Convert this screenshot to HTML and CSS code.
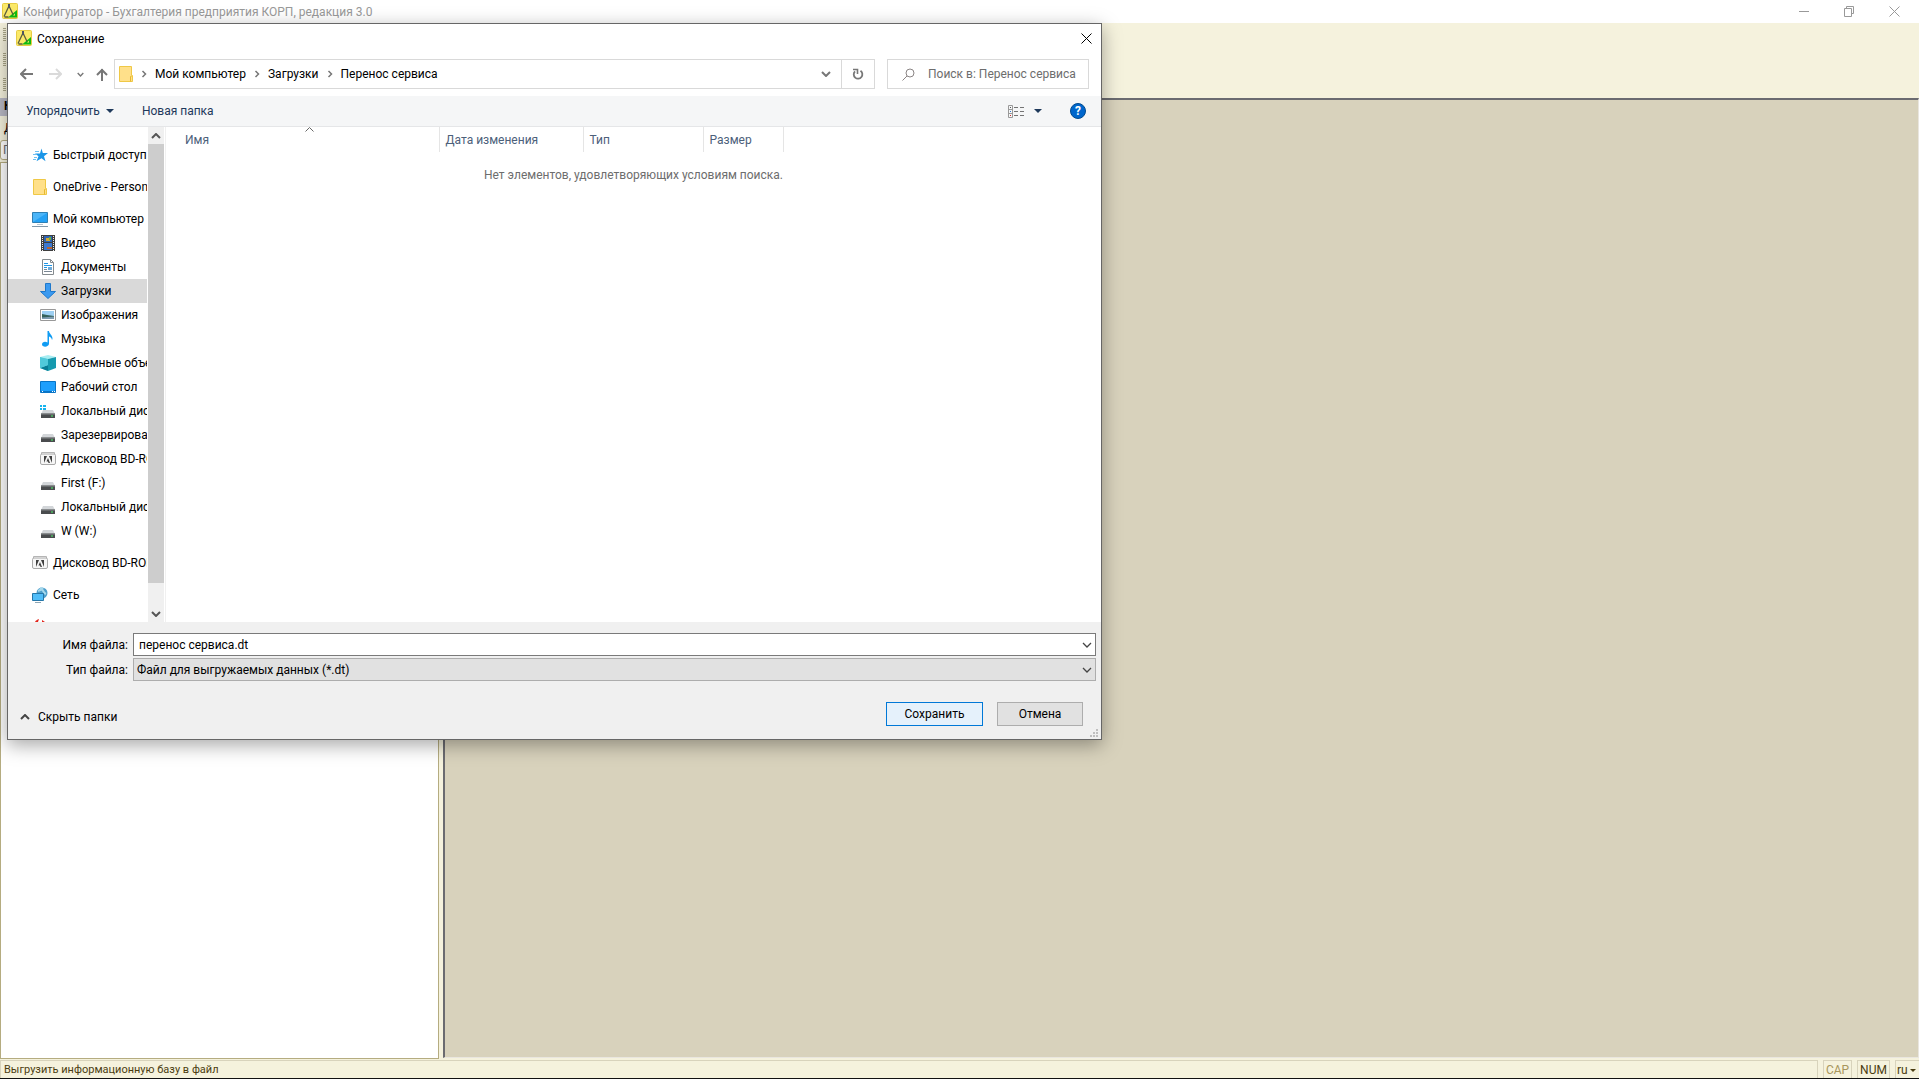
FILE: index.html
```html
<!DOCTYPE html>
<html lang="ru">
<head>
  <meta charset="UTF-8">
  <meta name="viewport" content="width=device-width, initial-scale=1.0">
  <title>Конфигуратор - Бухгалтерия предприятия КОРП, редакция 3.0</title>
  <link rel="stylesheet" href="styles.css">
</head>
<body>
  <!-- shared icons -->
  <svg class="sprite" aria-hidden="true">
    <symbol id="i-app" viewBox="0 0 16 16">
      <rect x=".5" y=".5" width="15" height="15" rx="1" fill="#fbe968" stroke="#e6cc45"/>
      <path d="M6 14.500L15 7v7.500z" fill="#0ebc12"/>
      <path d="M11 12.500l2-2v2z" fill="#fbe968"/>
      <path d="M7 3L2 13.500M7 3l4 8.500M2.500 14h4" fill="none" stroke="#5d5f3c" stroke-width="1.300"/>
      <path d="M6 1h2v4H6z" fill="#4e5560"/>
    </symbol>
    <symbol id="i-folder" viewBox="0 0 14 16">
      <path d="M.5.5h12v9h1v6H.5z" fill="#ffe08a" stroke="#efc846"/>
      <path d="M11.500 15.500v-5h1" fill="none" stroke="#e7b82f"/>
    </symbol>
    <symbol id="i-drive" viewBox="0 0 16 16">
      <path d="M3 7h10l2 4H1z" fill="#d3d6d9"/>
      <path d="M1 10.500h14V15H1z" fill="#4a4c4e"/>
      <path d="M1 10.500h14v1H1z" fill="#85888b"/>
      <path d="M11 12.500h2v1h-2z" fill="#4df26a"/>
    </symbol>
    <symbol id="i-bd" viewBox="0 0 16 16">
      <path d="M1.500 3V1.500h13V3" fill="none" stroke="#b5b5b5"/>
      <rect x=".5" y="3" width="15" height="10.500" rx="1.500" fill="#f6f6f6" stroke="#a9a9a9"/>
      <path d="M4 5h3L4 12zM12 5H9l3 7zM8 7l2 5H8.500L8 10.500H6.500z" fill="#3f3f3f"/>
    </symbol>
    <symbol id="i-down" viewBox="0 0 10 6">
      <path d="M1 1l4 4 4-4" fill="none" stroke="currentColor" stroke-width="1.300"/>
    </symbol>
    <symbol id="i-right" viewBox="0 0 6 8">
      <path d="M1.500 1l3 3-3 3" fill="none" stroke="currentColor" stroke-width="1.500"/>
    </symbol>
    <symbol id="i-caret" viewBox="0 0 8 4">
      <path d="M0 0h8L4 4z" fill="currentColor"/>
    </symbol>
    <symbol id="i-close" viewBox="0 0 11 11">
      <path d="M.5.5l10 10M10.500.5l-10 10" stroke="currentColor"/>
    </symbol>
  </svg>

  <div class="app">
    <header class="app-title">
      <svg class="icon"><use href="#i-app"/></svg>
      <h1>Конфигуратор - Бухгалтерия предприятия КОРП, редакция 3.0</h1>
      <div class="window-buttons">
        <button aria-label="Свернуть"><svg width="11" height="11"><path d="M0 5.500h10" stroke="currentColor"/></svg></button>
        <button aria-label="Восстановить"><svg width="11" height="11"><path d="M.5 2.500h7v8h-7zM2.500 2.500v-2h7v7h-2" fill="none" stroke="currentColor"/></svg></button>
        <button aria-label="Закрыть"><svg width="11" height="11"><use href="#i-close"/></svg></button>
      </div>
    </header>

    <div class="toolbars">
      <span class="grip"></span>
      <span class="grip"></span>
      <span class="grip"></span>
    </div>

    <div class="workspace">
      <aside class="config-panel">
        <div class="panel-title">Конфигурация</div>
        <div class="panel-menu">Действия</div>
        <input class="panel-search" type="text" placeholder="Поиск" aria-label="Поиск">
        <div class="config-tree"></div>
      </aside>
      <main class="mdi"></main>
    </div>

    <footer class="status">
      <span class="status-text">Выгрузить информационную базу в файл</span>
      <span class="status-cell off">CAP</span>
      <span class="status-cell num">NUM</span>
      <button class="status-cell lang">ru <svg width="6" height="3"><use href="#i-caret"/></svg></button>
    </footer>
  </div>

  <section class="dialog" role="dialog" aria-labelledby="dialog-title">
    <header class="dialog-title">
      <svg class="icon"><use href="#i-app"/></svg>
      <h2 id="dialog-title">Сохранение</h2>
      <button class="close" aria-label="Закрыть"><svg width="11" height="11"><use href="#i-close"/></svg></button>
    </header>

    <div class="navbar">
      <div class="history">
        <button aria-label="Назад"><svg width="13" height="12"><path d="M1 6h12M6 1L1 6l5 5" fill="none" stroke="#777" stroke-width="2"/></svg></button>
        <button aria-label="Вперед"><svg width="13" height="12"><path d="M0 6h12M7 1l5 5-5 5" fill="none" stroke="#dadada" stroke-width="2"/></svg></button>
        <button class="recent" aria-label="Последние"><svg width="7" height="5" viewBox="0 0 10 6"><path d="M1 1l4 4 4-4" fill="none" stroke="#777" stroke-width="2"/></svg></button>
        <button aria-label="Вверх"><svg width="12" height="13"><path d="M6 13V1M1 7l5-5 5 5" fill="none" stroke="#777" stroke-width="2"/></svg></button>
      </div>
      <nav class="address">
        <svg class="folder"><use href="#i-folder"/></svg>
        <svg class="sep"><use href="#i-right"/></svg>
        <a href="#">Мой компьютер</a>
        <svg class="sep"><use href="#i-right"/></svg>
        <a href="#">Загрузки</a>
        <svg class="sep"><use href="#i-right"/></svg>
        <a href="#">Перенос сервиса</a>
        <button class="address-drop" aria-label="Предыдущие расположения"><svg width="10" height="6" viewBox="0 0 10 6"><path d="M1 1l4 4 4-4" fill="none" stroke="currentColor" stroke-width="2"/></svg></button>
        <button class="refresh" aria-label="Обновить"><svg width="12" height="12"><path d="M8.500 2.800a4.300 4.300 0 1 1-5.500.5" fill="none" stroke="currentColor" stroke-width="1.800"/><path d="M1 1.500h4.500V6" fill="none" stroke="currentColor" stroke-width="1.600"/></svg></button>
      </nav>
      <div class="search">
        <svg width="13" height="13"><circle cx="8" cy="5" r="4" fill="none" stroke="#8b8585"/><path d="M5 8L.5 12.500" stroke="#8b8585"/></svg>
        <input type="text" placeholder="Поиск в: Перенос сервиса" aria-label="Поиск в: Перенос сервиса">
      </div>
    </div>

    <div class="commands">
      <button>Упорядочить <svg width="8" height="4"><use href="#i-caret"/></svg></button>
      <button>Новая папка</button>
      <button class="view" aria-label="Вид">
        <svg width="16" height="13"><path d="M.5.5h4v12h-4zM.5 4.500h4M.5 8.500h4" fill="none" stroke="#999"/><path d="M6 2.500h4M12 2.500h4M6 6.500h4M12 6.500h4M6 10.500h4M12 10.500h4" stroke="#747474"/><path d="M2 2h1v1H2z" fill="#555"/><path d="M2 6h1v1H2z" fill="#2d7bd0"/><path d="M2 10h1v1H2z" fill="#d02d2d"/></svg>
        <svg width="8" height="4"><use href="#i-caret"/></svg>
      </button>
      <button class="help" aria-label="Справка">?</button>
    </div>

    <div class="browser">
      <ul class="tree">
        <li class="root"><svg class="icon"><path d="M9.500 1.500l1.300 4.500H16l-4 3.200 1.500 5-4-3-5 3 2-5L3 6.500h5z" fill="#1b96e8"/><path d="M3 4.500h4M1 7.500h3M2 10.500h3M1 12.500h3" stroke="#6fc0f2"/></svg>Быстрый доступ</li>
        <li class="root"><svg class="icon"><use href="#i-folder"/></svg>OneDrive - Personal</li>
        <li class="root"><svg class="icon"><path d="M.5 1.500h15v10H.5z" fill="#4bb5f8" stroke="#2d7fb4"/><path d="M1 11L15 2v9z" fill="#25a1f4"/><path d="M5 13h6v1H5z" fill="#b9c5ce"/><path d="M0 15h16v1H0z" fill="#8299aa"/></svg>Мой компьютер</li>
        <li><svg class="icon"><path d="M1 0h14v16H1z" fill="#3e3e3e"/><path d="M4 1h8v6H4z" fill="#2d63b4"/><path d="M4 8h8v7H4z" fill="#3b78d0"/><path d="M6 3h4v3H6z" fill="#d1a536"/><path d="M9 2h2v3H9z" fill="#68ad42"/><path d="M7 12h5v2H7z" fill="#b96432"/><path d="M2.500 1v15M13.500 1v15" stroke="#eee" stroke-dasharray="1 1"/></svg>Видео</li>
        <li><svg class="icon"><path d="M2.500.5h8l3 3v12h-11z" fill="#fff" stroke="#858b8f"/><path d="M10.500.5v3h3" fill="none" stroke="#858b8f"/><path d="M4 4.500h4M4 6.500h8M4 8.500h3" stroke="#2196e6"/><path d="M8 8h4v3H8z" fill="#6daad9"/><path d="M4 10.500h3M4 12.500h8" stroke="#7a8794"/></svg>Документы</li>
        <li class="selected"><svg class="icon"><path d="M5.500.5h5v8h5L8 15.500.5 8.500h5z" fill="#3b9af0" stroke="#1f78cb"/></svg>Загрузки</li>
        <li><svg class="icon"><path d="M.5 2.500h15v11H.5z" fill="#fff" stroke="#989898"/><path d="M2 4h12v8H2z" fill="#9ed0f3"/><path d="M2 7l5 1 7 1v3H2z" fill="#34615a"/><path d="M2 10.500l12-1V12H2z" fill="#7d9bb0"/></svg>Изображения</li>
        <li><svg class="icon"><path d="M7.500 0H9c0 3 5 5 3 9-.2-2-1.500-3-3-3.500v7c0 4-7 4-7 1 0-2.500 3-3.500 5.500-2z" fill="#109cf3"/></svg>Музыка</li>
        <li><svg class="icon"><path d="M0 2l8 1.500V16l-8-3z" fill="#72dbe4"/><path d="M0 2l8-2 8 2-8 2z" fill="#a8edf2"/><path d="M8 4l8-2v11l-8 3z" fill="#1599ae"/><path d="M0 13l8-3v6z" fill="#087d96"/><path d="M0 2l8 2v6l-8 3z" fill="#50c9da"/></svg>Объемные объекты</li>
        <li><svg class="icon"><path d="M.5 2.500h15v11H.5z" fill="#1e9ffc" stroke="#0874c6"/><path d="M1 12.500h14" stroke="#0874c6"/><path d="M2 12.500h1M12 12.500h1M14 12.500h1" stroke="#fff"/></svg>Рабочий стол</li>
        <li><svg class="icon"><use href="#i-drive"/><path d="M0 2h2v2H0zM3 2h3v2H3zM0 5h2v2H0zM3 5h3v2H3z" fill="#16b4ee"/></svg>Локальный диск (C:)</li>
        <li><svg class="icon"><use href="#i-drive"/></svg>Зарезервировано (D:)</li>
        <li><svg class="icon"><use href="#i-bd"/></svg>Дисковод BD-ROM (E:)</li>
        <li><svg class="icon"><use href="#i-drive"/></svg>First (F:)</li>
        <li><svg class="icon"><use href="#i-drive"/></svg>Локальный диск (G:)</li>
        <li><svg class="icon"><use href="#i-drive"/></svg>W (W:)</li>
        <li class="root"><svg class="icon"><use href="#i-bd"/></svg>Дисковод BD-ROM (E:)</li>
        <li class="root"><svg class="icon"><circle cx="10" cy="6" r="5.500" fill="#4f9fcb"/><path d="M8 1c4 1 2 4 6 6M6 4c3-1 4-2 5-3" fill="none" stroke="#a5d8ec" stroke-width="2"/><path d="M.5 6.500h11v7H.5z" fill="#50bdf8" stroke="#2576a8"/><path d="M3 15.500h6" stroke="#8ea6b5"/></svg>Сеть</li>
        <li class="root"><svg class="icon"><path d="M3 3c1-2 2-2 4-3l-1 3zM10 1l3 2h-3z" fill="#e2251c"/></svg></li>
      </ul>
      <div class="scrollbar">
        <svg width="10" height="6" viewBox="0 0 10 6"><path d="M1 5l4-4 4 4" fill="none" stroke="#555" stroke-width="2"/></svg>
        <div class="thumb"></div>
        <svg width="10" height="6" viewBox="0 0 10 6"><path d="M1 1l4 4 4-4" fill="none" stroke="#555" stroke-width="2"/></svg>
      </div>
      <div class="files">
        <table>
          <thead>
            <tr>
              <th class="col-name">Имя<svg class="sort" width="9" height="5" viewBox="0 0 9 5"><path d="M.5 4.500l4-4 4 4" fill="none" stroke="#666"/></svg></th>
              <th class="col-date">Дата изменения</th>
              <th class="col-type">Тип</th>
              <th class="col-size">Размер</th>
            </tr>
          </thead>
        </table>
        <p class="empty">Нет элементов, удовлетворяющих условиям поиска.</p>
      </div>
    </div>

    <form class="save-form">
      <label for="file-name">Имя файла:</label>
      <div class="combo">
        <input type="text" id="file-name" value="перенос сервиса.dt">
        <svg width="10" height="6"><use href="#i-down"/></svg>
      </div>
      <label for="file-type">Тип файла:</label>
      <div class="combo gray">
        <select id="file-type">
          <option>Файл для выгружаемых данных (*.dt)</option>
        </select>
        <svg width="10" height="6"><use href="#i-down"/></svg>
      </div>
    </form>

    <footer class="actions">
      <button class="hide-folders"><svg width="10" height="6" viewBox="0 0 10 6"><path d="M1 5l4-4 4 4" fill="none" stroke="#444" stroke-width="2"/></svg>Скрыть папки</button>
      <button class="btn primary">Сохранить</button>
      <button class="btn">Отмена</button>
    </footer>
    <svg class="resize" width="8" height="8"><path d="M6 0h2v2H6zM3 3h2v2H3zM6 3h2v2H6zM0 6h2v2H0zM3 6h2v2H3zM6 6h2v2H6z" fill="#bfbfbf"/></svg>
  </section>
</body>
</html>
```
FILE: styles.css
```css
* {
  box-sizing: border-box;
}

body {
  margin: 0;
  font-family: Roboto, "Noto Sans", sans-serif;
  font-size: 12px;
  line-height: 16px;
  color: #000;
  overflow: hidden;
}

h1, h2, p, ul {
  margin: 0;
  padding: 0;
  font-size: 12px;
  font-weight: normal;
}

button, input, select {
  font: inherit;
  color: inherit;
  padding: 0;
  border: none;
  background: none;
}

svg {
  display: block;
  flex: none;
}

.sprite {
  position: absolute;
  width: 0;
  height: 0;
}

.icon {
  width: 16px;
  height: 16px;
}

/* main window */
.app {
  display: flex;
  flex-direction: column;
  height: 100vh;
  background: #f5f2dd;
  border-bottom: 1px solid #111;
}

.app-title {
  display: flex;
  align-items: center;
  gap: 5px;
  height: 23px;
  padding: 0 2px 1px 2px;
  background: #fff;
  color: #999;
}

.app-title h1, .dialog-title h2 {
  padding-top: 2px;
}

.window-buttons {
  display: flex;
  margin-left: auto;
}

.window-buttons button {
  display: flex;
  justify-content: center;
  width: 45px;
}

.toolbars {
  display: flex;
  flex-direction: column;
  gap: 12px;
  height: 75px;
  padding: 5px 3px;
}

.grip {
  width: 3px;
  height: 13px;
  background: repeating-linear-gradient(#a9a587 0 1px, transparent 1px 2px);
}

.workspace {
  display: flex;
  flex: 1;
  gap: 4px;
  min-height: 0;
}

.config-panel {
  display: flex;
  flex-direction: column;
  width: 439px;
}

.panel-title {
  height: 18px;
  padding-left: 4px;
  background: #b9b9c4;
  font-weight: bold;
}

.panel-menu {
  height: 24px;
  padding: 4px;
}

.panel-search {
  height: 20px;
  padding-left: 2px;
  background: #fff;
  border: 1px solid #b5ac80;
  border-radius: 3px;
}

.config-tree {
  flex: 1;
  margin-top: 2px;
  background: #fff;
  border: 1px solid #b5ac80;
}

.mdi {
  flex: 1;
  margin-bottom: 1px;
  background: #d8d2bc;
  border: 1px solid #e9e6df;
  border-top: 2px solid #6b6b70;
  border-left: 2px solid #6b6b70;
}

.status {
  display: flex;
  gap: 5px;
  height: 18px;
  margin-top: 1px;
  color: #4a3c10;
}

.status-text, .status-cell {
  border: 1px solid #d8d3bc;
  border-bottom: none;
}

.status-text {
  flex: 1;
  padding: 1px 3px;
  font-size: 11px;
}

.status-cell {
  width: 29px;
  padding-top: 1px;
  text-align: center;
}

.status-cell.num {
  width: 33px;
}

.off {
  color: #a8965c;
}

.status-cell.lang {
  display: flex;
  align-items: center;
  gap: 2px;
  width: 24px;
  padding-left: 1px;
  border-right: none;
}

/* save dialog */
.dialog {
  position: absolute;
  left: 7px;
  top: 23px;
  width: 1095px;
  max-width: calc(100vw - 14px);
  background: #f0f0f0;
  border: 1px solid #666;
  box-shadow: 0 5px 18px rgba(0, 0, 0, 0.35);
}

.dialog-title {
  display: flex;
  align-items: center;
  gap: 5px;
  height: 30px;
  padding: 0 9px 2px 8px;
  background: #fff;
}

.close {
  margin-left: auto;
}

.navbar {
  display: flex;
  align-items: center;
  height: 42px;
  padding: 0 12px 2px;
  background: #fff;
}

.history {
  display: flex;
  align-items: center;
  width: 94px;
  gap: 16px;
}

.history .recent {
  margin: 0 -4px 0 -1px;
}

.address {
  display: flex;
  align-items: center;
  flex: 1;
  gap: 8px;
  height: 30px;
  margin-right: 12px;
  padding-left: 4px;
  border: 1px solid #d9d9d9;
}

.address a {
  color: #000;
  text-decoration: none;
}

.folder {
  width: 14px;
  height: 16px;
}

.sep {
  width: 6px;
  height: 8px;
  color: #777;
}

.address-drop {
  margin-left: auto;
  color: #777;
}

.refresh {
  display: flex;
  align-items: center;
  justify-content: center;
  width: 33px;
  height: 28px;
  margin-left: 2px;
  border-left: 1px solid #d9d9d9;
  color: #777;
}

.search {
  display: flex;
  align-items: center;
  gap: 13px;
  width: 202px;
  height: 30px;
  padding-left: 14px;
  border: 1px solid #d9d9d9;
}

.search input {
  flex: 1;
  min-width: 0;
}

::placeholder {
  color: #6d6d6d;
  opacity: 1;
}

.commands {
  display: flex;
  align-items: center;
  gap: 28px;
  height: 31px;
  padding: 0 15px 0 18px;
  background: #f5f6f7;
  border-bottom: 1px solid #e5e6e8;
  color: #1e395b;
}

.commands button {
  display: flex;
  align-items: center;
  gap: 6px;
}

.commands .view {
  gap: 10px;
  margin-left: auto;
}

.commands .help {
  justify-content: center;
  width: 16px;
  height: 16px;
  border: 1px solid #004a8f;
  border-radius: 50%;
  background: #0066cc;
  color: #fff;
  font-weight: bold;
}

.browser {
  display: flex;
  height: 495px;
  background: #fff;
}

.tree {
  width: 139px;
  padding-top: 16px;
  list-style: none;
  overflow: hidden;
}

.tree li {
  display: flex;
  align-items: center;
  gap: 5px;
  height: 24px;
  padding-left: 32px;
  white-space: nowrap;
}

.tree .root {
  padding-left: 24px;
}

.tree .root + .root, .tree li:not(.root) + .root {
  margin-top: 8px;
}

.tree .selected {
  background: #d9d9d9;
}

.scrollbar {
  display: flex;
  flex-direction: column;
  align-items: center;
  width: 16px;
  margin-left: 1px;
  padding: 6px 0 5px;
  background: #f0f0f0;
}

.thumb {
  flex: 1;
  width: 16px;
  margin: 5px 0 28px;
  background: #cdcdcd;
}

.files {
  flex: 1;
  margin-left: 1px;
  border-left: 1px solid #f0f0f0;
}

.files table {
  table-layout: fixed;
  width: 617px;
  border-collapse: collapse;
}

.files th {
  position: relative;
  height: 25px;
  padding: 0 6px;
  border-right: 1px solid #e5e5e5;
  color: #4c607a;
  font-weight: normal;
  text-align: left;
}

.files .col-name {
  width: 273px;
  padding-left: 19px;
}

.col-date {
  width: 144px;
}

.col-type {
  width: 120px;
}

.col-size {
  width: 80px;
}

/* sort mark over the column title */
.sort {
  position: absolute;
  top: 0;
  left: 51%;
}

.empty {
  padding-top: 15px;
  color: #6d6d6d;
  text-align: center;
}

.save-form {
  display: grid;
  grid-template-columns: 120px 1fr;
  gap: 2px 5px;
  align-items: center;
  padding: 11px 5px 0 0;
}

.save-form label {
  text-align: right;
}

.combo {
  display: flex;
  align-items: center;
  height: 23px;
  padding-right: 3px;
  background: #fff;
  border: 1px solid #7a7a7a;
  color: #444;
}

.combo.gray {
  background: #e1e1e1;
  border-color: #adadad;
}

.combo input, .combo select {
  flex: 1;
  padding-left: 5px;
  color: #000;
  appearance: none;
}

.combo select {
  padding-left: 3px;
}

.actions {
  display: flex;
  align-items: center;
  gap: 14px;
  padding: 21px 18px 13px 12px;
}

.hide-folders {
  display: flex;
  align-items: center;
  gap: 8px;
  margin-right: auto;
  padding-top: 6px;
}

.btn {
  width: 86px;
  height: 24px;
  background: #e1e1e1;
  border: 1px solid #adadad;
}

.btn.primary {
  width: 97px;
  background: #e5f1fb;
  border-color: #0078d7;
}

.resize {
  position: absolute;
  right: 3px;
  bottom: 2px;
}
```
